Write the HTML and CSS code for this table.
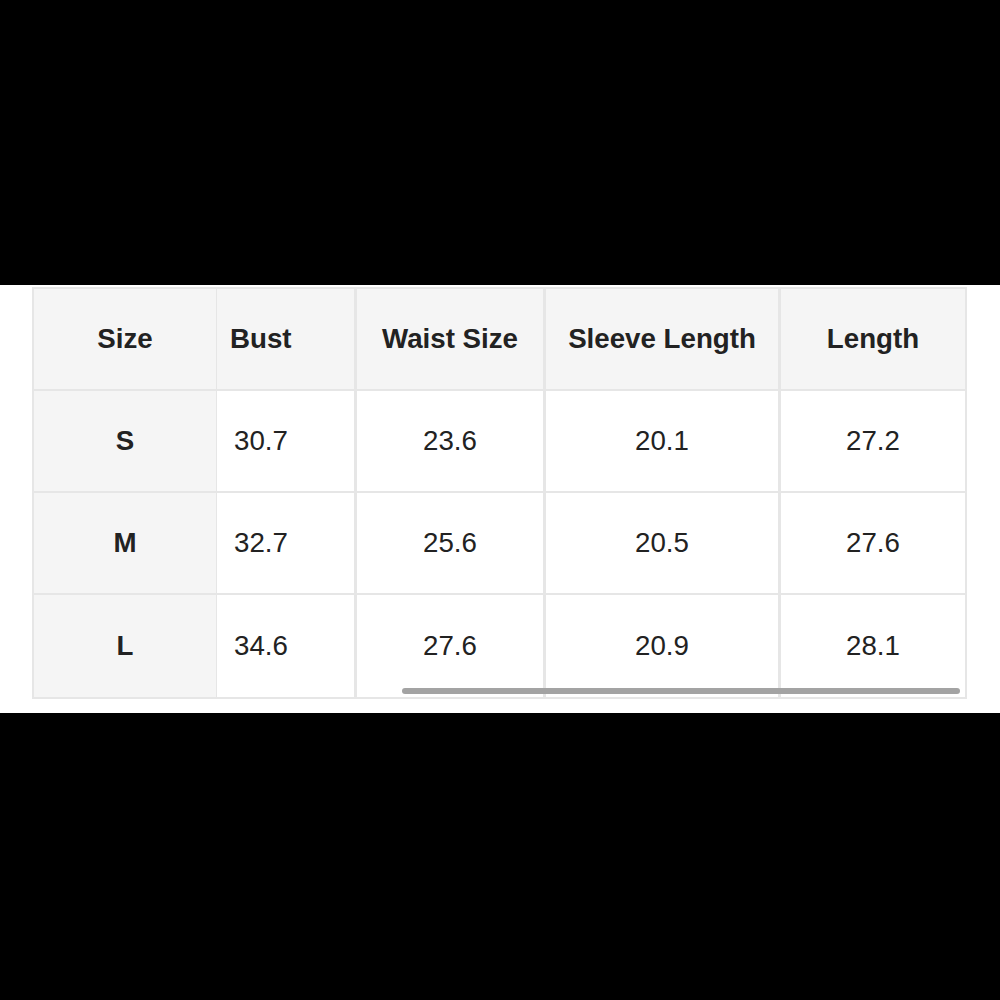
FILE: index.html
```html
<!DOCTYPE html>
<html>
<head>
<meta charset="utf-8">
<link rel="stylesheet" href="styles.css">
</head>
<body>
<div class="top-black"></div>
<section class="band">
  <div class="scroller">
    <div class="grid">
      <div class="cell head c1">Size</div>
      <div class="cell head c2">Bust</div>
      <div class="cell head c3">Waist Size</div>
      <div class="cell head c4">Sleeve Length</div>
      <div class="cell head c5">Length</div>

      <div class="cell side c1">S</div>
      <div class="cell c2">30.7</div>
      <div class="cell c3">23.6</div>
      <div class="cell c4">20.1</div>
      <div class="cell c5">27.2</div>

      <div class="cell side c1">M</div>
      <div class="cell c2">32.7</div>
      <div class="cell c3">25.6</div>
      <div class="cell c4">20.5</div>
      <div class="cell c5">27.6</div>

      <div class="cell side c1 last">L</div>
      <div class="cell c2 last">34.6</div>
      <div class="cell c3 last">27.6</div>
      <div class="cell c4 last">20.9</div>
      <div class="cell c5 last">28.1</div>
    </div>
    <div class="scrollbar"></div>
  </div>
</section>
<div class="bottom-black"></div>
</body>
</html>
```

FILE: styles.css
```css
html, body {
  margin: 0;
  padding: 0;
  background: #000;
}
body {
  width: 1000px;
  height: 1000px;
  font-family: "Liberation Sans", Arial, sans-serif;
  color: #222;
}
.top-black {
  height: 285px;
  background: #000;
}
.band {
  background: #fff;
  height: 428px;
  padding: 2px 0 0 32px;
  box-sizing: border-box;
}
.scroller {
  position: relative;
  width: 935px;
}
.grid {
  display: grid;
  grid-template-columns: 183px 140px 189px 235px 186px;
  grid-template-rows: 102px 102px 102px 104px;
  border-left: 2px solid #e6e6e6;
  border-top: 2px solid #e6e6e6;
  width: 935px;
  box-sizing: border-box;
}
.cell {
  box-sizing: border-box;
  border-right: 2px solid #e6e6e6;
  border-bottom: 2px solid #e6e6e6;
  display: flex;
  align-items: center;
  justify-content: center;
  font-size: 27.7px;
  background: #fff;
  color: #222;
}
.cell.c2 {
  border-right-width: 3px;
  justify-content: flex-start;
  padding-left: 17px;
}
.cell.c3, .cell.c4 {
  border-right-width: 3px;
}
.cell.c1 {
  border-right-width: 1px;
}
.head {
  background: #f5f5f5;
  font-weight: bold;
  color: #222;
}
.head.c2 {
  padding-left: 13px;
}
.side {
  background: #f5f5f5;
  font-weight: bold;
}
.scrollbar {
  position: absolute;
  left: 370px;
  top: 401px;
  width: 558px;
  height: 6px;
  border-radius: 3px;
  background: #a3a3a3;
}
.bottom-black {
  height: 287px;
  background: #000;
}
```
